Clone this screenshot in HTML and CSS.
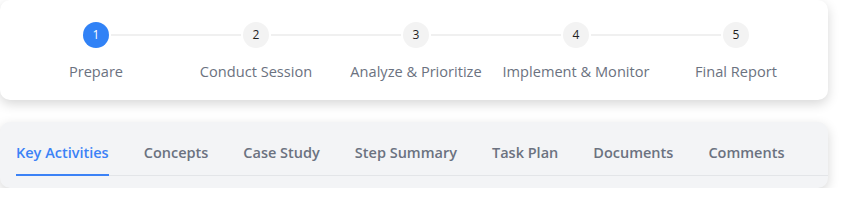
FILE: index.html
```html
<!DOCTYPE html>
<html>
<head>
<meta charset="utf-8">
<link rel="stylesheet" href="styles.css">
</head>
<body>
<div class="page">
  <section class="card steps-card">
    <ol class="steps">
      <li class="step active">
        <div class="step-head"><span class="line none"></span><span class="dot">1</span><span class="line"></span></div>
        <div class="step-label">Prepare</div>
      </li>
      <li class="step">
        <div class="step-head"><span class="line"></span><span class="dot">2</span><span class="line"></span></div>
        <div class="step-label">Conduct Session</div>
      </li>
      <li class="step">
        <div class="step-head"><span class="line"></span><span class="dot">3</span><span class="line"></span></div>
        <div class="step-label">Analyze &amp; Prioritize</div>
      </li>
      <li class="step">
        <div class="step-head"><span class="line"></span><span class="dot">4</span><span class="line"></span></div>
        <div class="step-label">Implement &amp; Monitor</div>
      </li>
      <li class="step">
        <div class="step-head"><span class="line"></span><span class="dot">5</span><span class="line none"></span></div>
        <div class="step-label">Final Report</div>
      </li>
    </ol>
  </section>
  <section class="card tabs-card">
    <nav class="tabs">
      <a class="tab active">Key Activities</a>
      <a class="tab">Concepts</a>
      <a class="tab">Case Study</a>
      <a class="tab">Step Summary</a>
      <a class="tab">Task Plan</a>
      <a class="tab">Documents</a>
      <a class="tab">Comments</a>
    </nav>
  </section>
</div>
</body>
</html>
```

FILE: styles.css
```css
* { box-sizing: border-box; }
html, body { margin: 0; padding: 0; background: #ffffff; }
body { font-family: "Open Sans", "Noto Sans", Arial, sans-serif; }

.page {
  width: 828px;
  display: flex;
  flex-direction: column;
  gap: 22px;
}

.card {
  border-radius: 10px;
  box-shadow: 0 4px 12px rgba(0, 0, 0, 0.16);
}

.steps-card {
  background: #ffffff;
  height: 100px;
  padding: 22px 0 0 16px;
}

.steps {
  list-style: none;
  margin: 0;
  padding: 0;
  display: grid;
  grid-template-columns: repeat(5, 160px);
}

.step { display: flex; flex-direction: column; align-items: stretch; }

.step-head {
  display: flex;
  align-items: center;
  height: 26px;
}

.line {
  flex: 1;
  height: 2px;
  background: #f0f0f0;
}
.line:first-child { margin-right: 2px; }
.line:last-child { margin-left: 2px; }
.line.none { background: transparent; }

.dot {
  width: 26px;
  height: 26px;
  border-radius: 50%;
  background: #f3f3f3;
  color: #1f1f1f;
  font-size: 12px;
  display: flex;
  align-items: center;
  justify-content: center;
  line-height: 1;
}
.step.active .dot { background: #3182f6; color: #ffffff; }

.step-label {
  margin-top: 12px;
  text-align: center;
  font-size: 14.6px;
  line-height: 22px;
  color: #6b7280;
  white-space: nowrap;
}

.tabs-card {
  background: #f3f4f6;
  height: 66px;
  padding: 20px 0 0 16px;
}

.tabs {
  display: flex;
  gap: 35px;
  border-bottom: 1px solid #e3e5e8;
}

.tab {
  font-size: 14.5px;
  font-weight: 600;
  line-height: 22px;
  color: #6b7280;
  padding-bottom: 10px;
  border-bottom: 2px solid transparent;
  margin-bottom: -1px;
  white-space: nowrap;
}
.tab.active { color: #3b82f6; border-bottom-color: #3b82f6; }
```
